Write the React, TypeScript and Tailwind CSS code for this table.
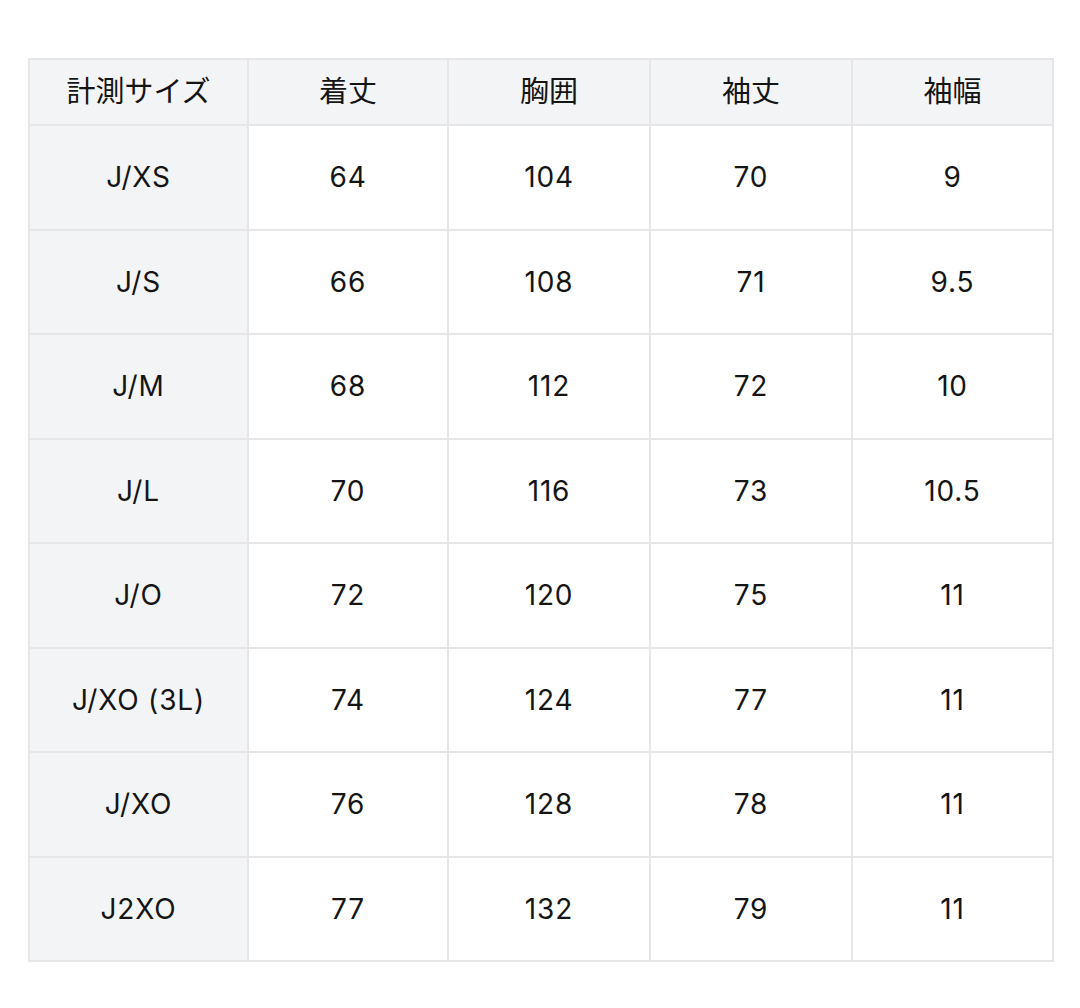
const headers = ["計測サイズ", "着丈", "胸囲", "袖丈", "袖幅"];

const rows = [
	["J/XS", "64", "104", "70", "9"],
	["J/S", "66", "108", "71", "9.5"],
	["J/M", "68", "112", "72", "10"],
	["J/L", "70", "116", "73", "10.5"],
	["J/O", "72", "120", "75", "11"],
	["J/XO (3L)", "74", "124", "77", "11"],
	["J/XO", "76", "128", "78", "11"],
	["J2XO", "77", "132", "79", "11"],
];

export default function App() {
	return (
		<div
			className="min-h-[1008px] bg-white pt-[58px] pl-[28px] text-[#151515]"
			style={{ fontFamily: '"Inter", "Noto Sans CJK JP", sans-serif' }}
		>
			<table className="w-[1024px] table-fixed border-collapse border-2 border-[#e6e6e8] text-[28px] tracking-[0.03em]">
				<colgroup>
					<col className="w-[219px]" />
					<col className="w-[200px]" />
					<col className="w-[202px]" />
					<col className="w-[202px]" />
					<col className="w-[201px]" />
				</colgroup>
				<thead>
					<tr className="h-[66px] bg-[#f3f4f6]">
						{headers.map((h) => (
							<th
								key={h}
								className="border-2 border-[#e6e6e8] text-center text-[29px] font-normal tracking-normal"
							>
								{h}
							</th>
						))}
					</tr>
				</thead>
				<tbody>
					{rows.map((row, i) => (
						<tr key={i} className="h-[104.5px]">
							{row.map((cell, j) => (
								<td
									key={j}
									className={
										j === 0
											? "border-2 border-[#e6e6e8] bg-[#f3f4f6] text-center"
											: "border-2 border-[#e6e6e8] bg-white text-center"
									}
								>
									{cell}
								</td>
							))}
						</tr>
					))}
				</tbody>
			</table>
		</div>
	);
}
